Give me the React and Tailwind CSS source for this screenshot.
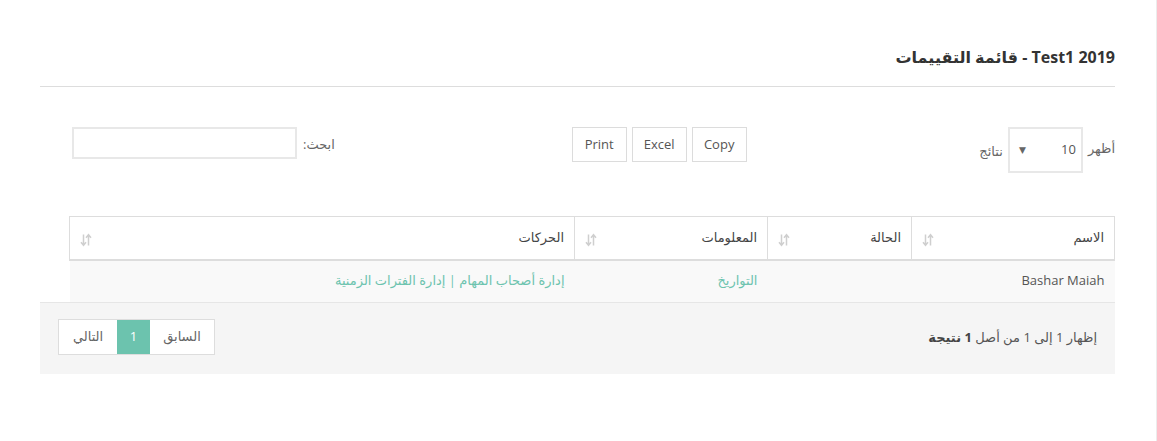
import React from 'react';

const font = { fontFamily: '"Open Sans", "DejaVu Sans", "Noto Sans", sans-serif' };

function SortIcon() {
  return (
    <svg width="12" height="14" viewBox="0 0 12 14" className="shrink-0 mt-[5px]">
      <path d="M3.5 1.5v10.5M1 9.3l2.5 3 2.5-3" stroke="#cfcfcf" strokeWidth="1.5" fill="none" />
      <path d="M8.5 12.5V2M6 4.7l2.5-3 2.5 3" stroke="#cfcfcf" strokeWidth="1.5" fill="none" />
    </svg>
  );
}

const columns = [
  { label: 'الاسم', width: 'w-[203px]' },
  { label: 'الحالة', width: 'w-[144px]' },
  { label: 'المعلومات', width: 'w-[193px]' },
  { label: 'الحركات', width: 'w-[505px]' },
];

export default function App() {
  return (
    <div dir="rtl" style={font} className="w-[1157px] h-[441px] bg-white border-r border-[#ececec] text-[#555] overflow-hidden">
      <div className="pl-[40px] pr-[41px]">
        <h3 className="pt-[45px] pb-[17px] border-b border-[#dddddd] text-[16px] leading-[24px] font-bold text-[#333]">
          Test1 2019 - قائمة التقييمات
        </h3>

        <div className="mt-[40px] grid grid-cols-3 items-start text-[13px]">
          <div className="flex items-center gap-[5px] text-[#666]">
            <span className="-mt-[3px]">أظهر</span>
            <div className="w-[75px] h-[46px] border-2 border-[#e8e8e8] flex items-center justify-between pr-[5px] pl-[9px] text-[#555]">
              <span>10</span>
              <span className="text-[9px] text-[#666]">▼</span>
            </div>
            <span className="mt-[4px]">نتائج</span>
          </div>

          <div className="flex gap-[5px] mr-[10px]">
            {['Copy', 'Excel', 'Print'].map((b) => (
              <button key={b} className="w-[55px] h-[35px] border border-[#dcdcdc] bg-white text-[#555] text-[13px]">
                {b}
              </button>
            ))}
          </div>

          <div className="flex items-center gap-[6px] justify-end pl-[32px] text-[#666]">
            <span className="mt-[3px]">ابحث:</span>
            <div className="w-[225px] h-[32px] border-2 border-[#e8e8e8]"></div>
          </div>
        </div>

        <table className="mt-[43px] ml-[30px] w-[1045px] table-fixed border-collapse text-[13px]">
          <thead>
            <tr>
              {columns.map((c) => (
                <th key={c.label} className={`${c.width} h-[43px] border border-[#dddddd] border-b-2 font-normal text-[#444] px-[10px]`}>
                  <div className="flex items-center justify-between">
                    <span>{c.label}</span>
                    <SortIcon />
                  </div>
                </th>
              ))}
            </tr>
          </thead>
          <tbody>
            <tr className="bg-[#f9f9f9] h-[42px]">
              <td className="px-[10px] text-[#555]">Bashar Maiah</td>
              <td className="px-[10px]"></td>
              <td className="px-[10px] text-[#6cc3ae]">التواريخ</td>
              <td className="px-[10px] text-[#6cc3ae]">إدارة أصحاب المهام | إدارة الفترات الزمنية</td>
            </tr>
          </tbody>
        </table>

        <div className="h-[72px] bg-[#f5f5f5] border-t border-[#e6e6e6] flex items-center justify-between px-[18px] text-[13px]">
          <div className="text-[#555]">
            إظهار 1 إلى 1 من أصل <b className="text-[#444]">1 نتيجة</b>
          </div>
          <div className="flex h-[36px] -mt-[3px] border border-[#dddddd] bg-white text-[#666]">
            <span className="w-[64px] flex items-center justify-center">السابق</span>
            <span className="w-[33px] flex items-center justify-center bg-[#6cc3ae] text-white">1</span>
            <span className="w-[58px] flex items-center justify-center">التالي</span>
          </div>
        </div>
      </div>
    </div>
  );
}
